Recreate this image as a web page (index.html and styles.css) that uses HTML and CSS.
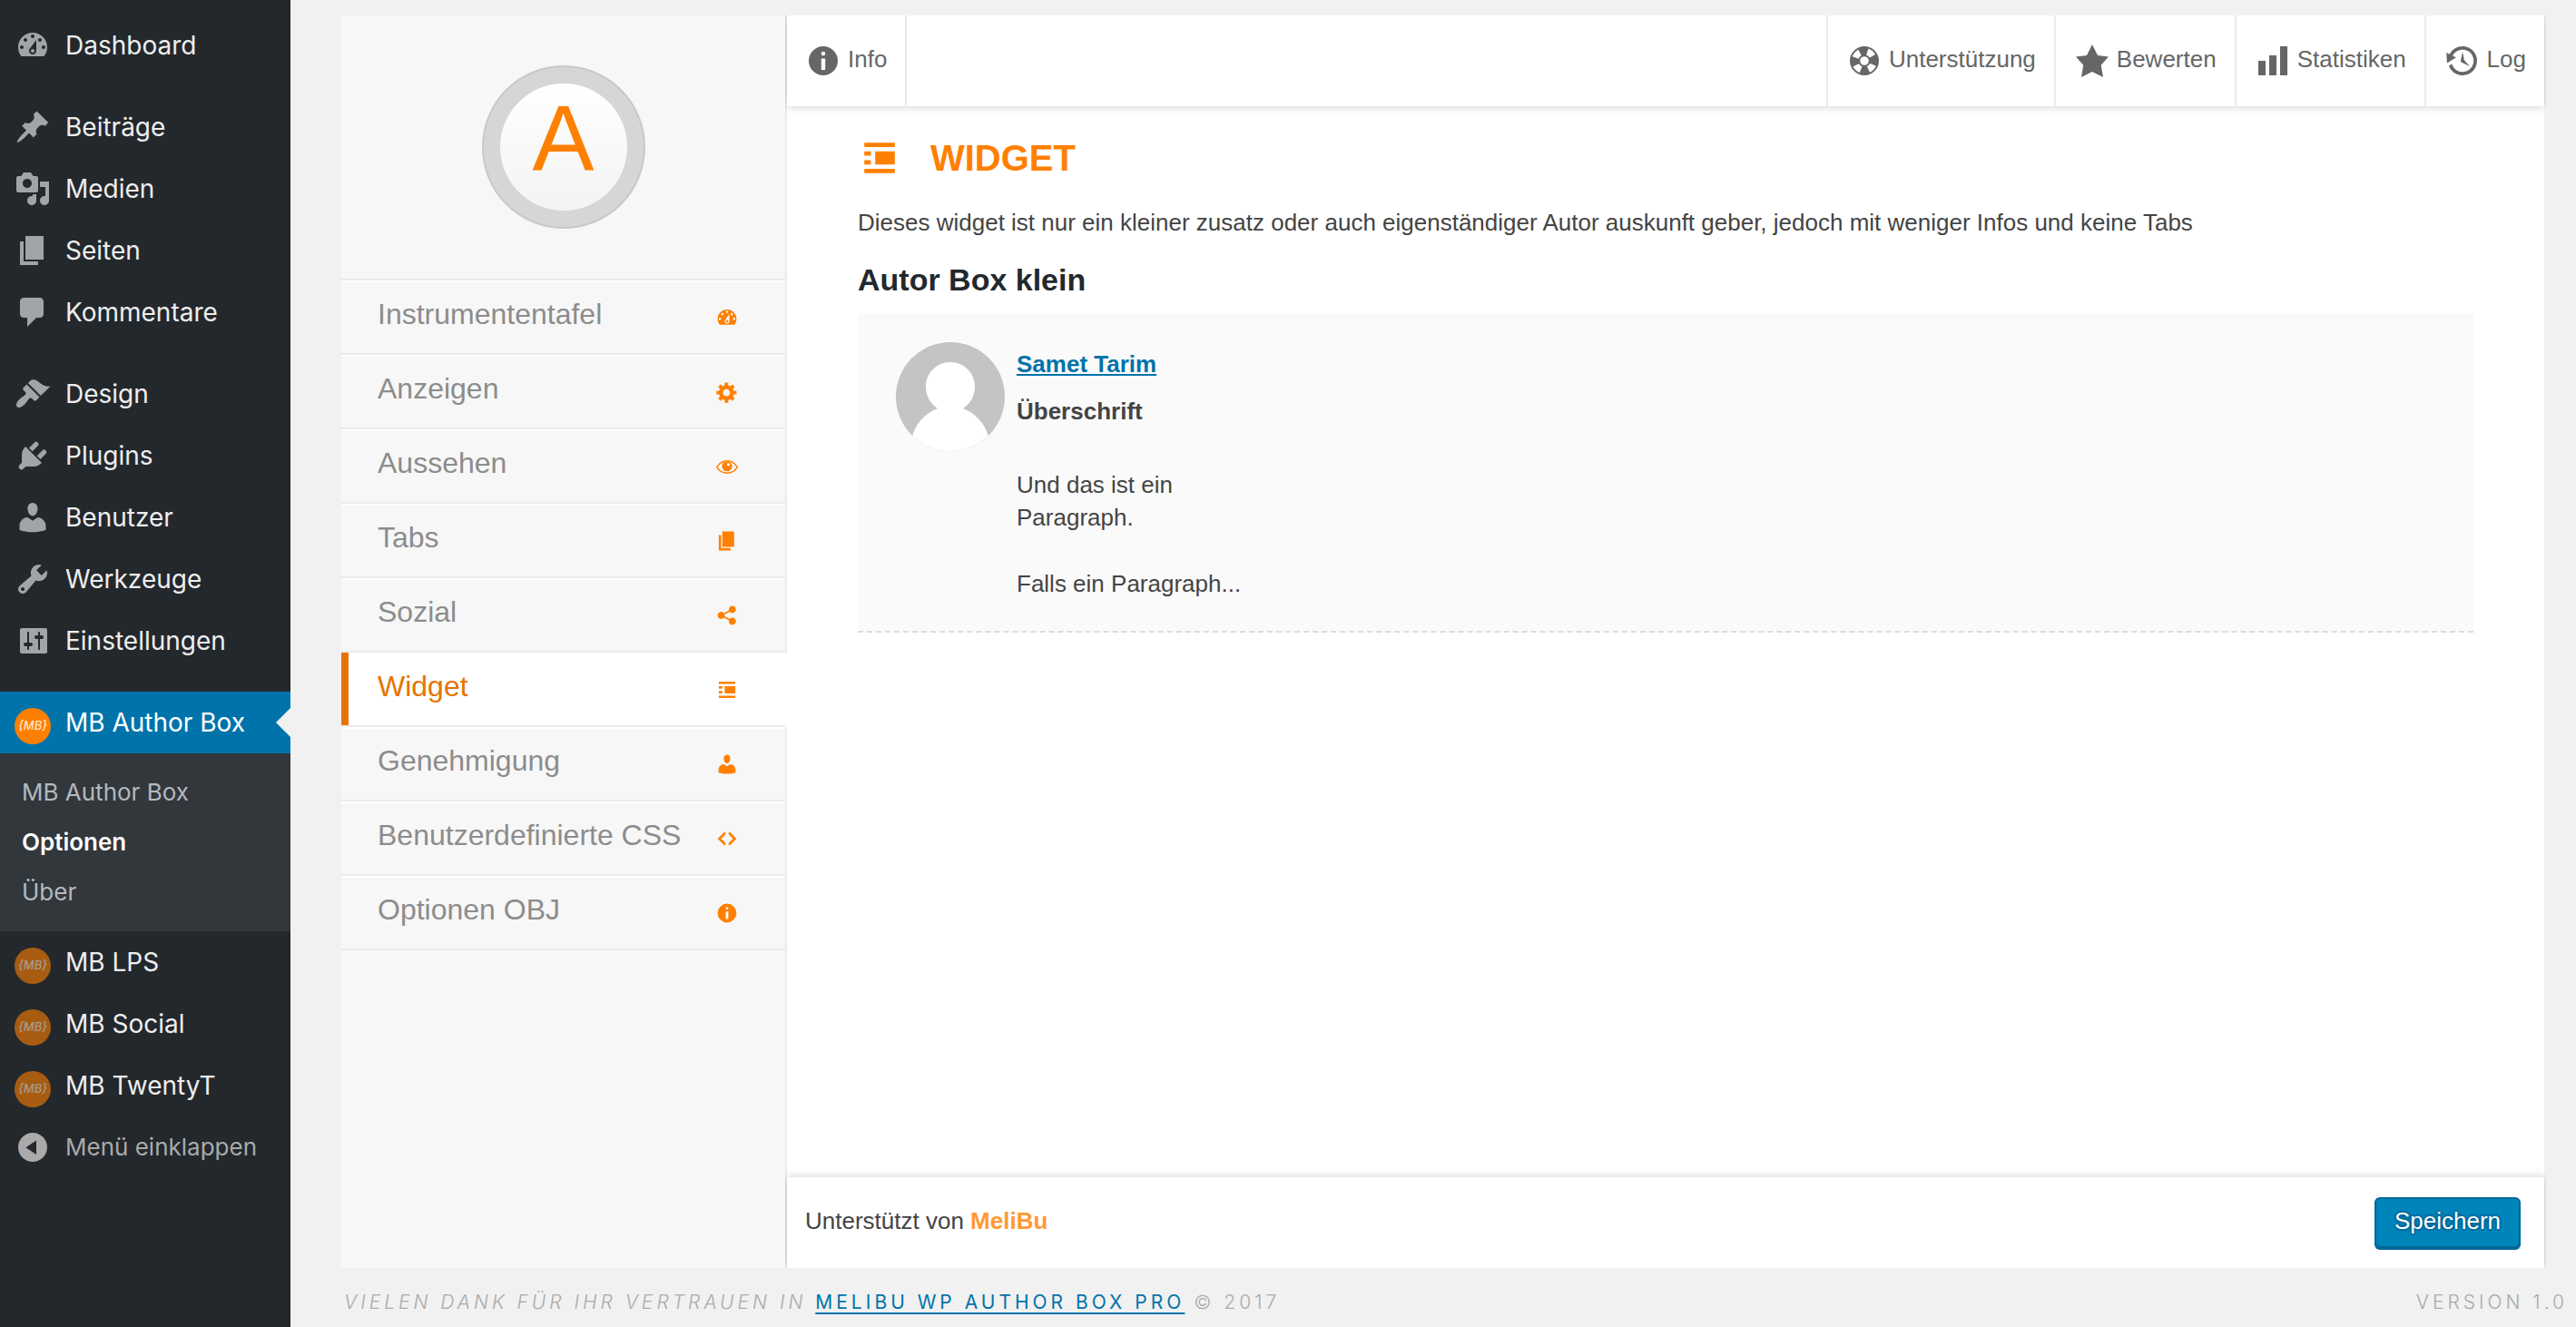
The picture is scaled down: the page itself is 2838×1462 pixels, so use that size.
FILE: index.html
```html
<!DOCTYPE html>
<html lang="de">
<head>
<meta charset="utf-8">
<title>MB Author Box – Optionen</title>
<link rel="stylesheet" href="styles.css">
</head>
<body>
<svg class="sprite" aria-hidden="true">
  <symbol id="i-dashboard" viewBox="0 0 20 20"><path fill-rule="evenodd" d="M3.76 16h12.48c1.1-1.37 1.76-3.11 1.76-5 0-4.42-3.58-8-8-8s-8 3.58-8 8c0 1.89.66 3.63 1.76 5zM10 4c.55 0 1 .45 1 1s-.45 1-1 1-1-.45-1-1 .45-1 1-1zM6 6c.55 0 1 .45 1 1s-.45 1-1 1-1-.45-1-1 .45-1 1-1zm8 0c.55 0 1 .45 1 1s-.45 1-1 1-1-.45-1-1 .45-1 1-1zm-5.37 5.55L12 7v6c0 1.1-.9 2-2 2s-2-.9-2-2c0-.57.24-1.08.63-1.45zM4 10c.55 0 1 .45 1 1s-.45 1-1 1-1-.45-1-1 .45-1 1-1zm12 0c.55 0 1 .45 1 1s-.45 1-1 1-1-.45-1-1 .45-1 1-1zm-5 3c0-.55-.45-1-1-1s-1 .45-1 1 .45 1 1 1 1-.45 1-1z"/></symbol>
  <symbol id="i-post" viewBox="0 0 20 20"><path d="M10.44 3.02l1.82-1.82 6.36 6.35-1.83 1.82c-1.05-.68-2.48-.57-3.41.36l-.75.75c-.92.93-1.04 2.35-.35 3.41l-1.83 1.82-2.41-2.41-2.8 2.79c-.42.42-3.38 2.71-3.8 2.29s1.86-3.39 2.28-3.81l2.79-2.79L4.1 9.36l1.83-1.82c1.05.69 2.48.57 3.4-.36l.75-.75c.93-.92 1.05-2.35.36-3.41z"/></symbol>
  <symbol id="i-media" viewBox="0 0 20 20"><path fill-rule="evenodd" d="M13 11V4c0-.55-.45-1-1-1h-1.67L9 1H5L3.67 3H2c-.55 0-1 .45-1 1v7c0 .55.45 1 1 1h10c.55 0 1-.45 1-1zM7 4.5c1.38 0 2.5 1.12 2.5 2.5S8.38 9.5 7 9.5 4.5 8.38 4.5 7 5.62 4.5 7 4.5zM14 6h5v10.5c0 1.38-1.12 2.5-2.5 2.5S14 17.88 14 16.5s1.12-2.5 2.5-2.5c.17 0 .34.02.5.05V9h-3V6zm-4 8.05V13h2v3.5c0 1.38-1.12 2.5-2.5 2.5S7 17.88 7 16.5 8.12 14 9.5 14c.17 0 .34.02.5.05z"/></symbol>
  <symbol id="i-pages" viewBox="0 0 20 20"><path d="M6 15V2h10v13H6zm-1 1h8v2H3V5h2v11z"/></symbol>
  <symbol id="i-comments" viewBox="0 0 20 20"><path d="M5 2h9c1.1 0 2 .9 2 2v7c0 1.1-.9 2-2 2h-2l-5 5v-5H5c-1.1 0-2-.9-2-2V4c0-1.1.9-2 2-2z"/></symbol>
  <symbol id="i-design" viewBox="0 0 20 20"><path d="M14.48 11.06L7.41 3.99l1.5-1.5c.5-.56 2.3-.47 3.51.32 1.21.8 1.43 1.28 2.91 2.1 1.18.64 2.45 1.26 4.45.85zm-.71.71L6.7 4.7 4.93 6.47c-.39.39-.39 1.02 0 1.41l1.06 1.06c.39.39.39 1.03 0 1.42-.6.6-1.43 1.11-2.21 1.69-.35.26-.7.53-1.01.84C1.43 14.23.4 16.08 1.4 17.07c.99 1 2.84-.03 4.18-1.36.31-.31.58-.66.85-1.02.57-.78 1.08-1.61 1.69-2.21.39-.39 1.02-.39 1.41 0l1.06 1.06c.39.39 1.02.39 1.41 0z"/></symbol>
  <symbol id="i-plugins" viewBox="0 0 20 20"><path d="M13.11 4.36L9.87 7.6 8 5.73l3.24-3.24c.35-.34 1.05-.2 1.56.32.52.51.66 1.21.31 1.55zm-8 1.77l.91-1.12 9.01 9.01-1.19.84c-.71.71-2.63 1.16-3.82 1.16H6.14L4.9 17.26c-.59.59-1.54.59-2.12 0-.59-.58-.59-1.53 0-2.12l1.24-1.24v-3.88c0-1.13.4-3.19 1.09-3.89zm7.26 3.97l3.24-3.24c.34-.35 1.04-.21 1.55.31.52.51.66 1.21.31 1.55l-3.24 3.25z"/></symbol>
  <symbol id="i-users" viewBox="0 0 20 20"><path d="M10 9.25c-2.27 0-2.73-3.44-2.73-3.44C7 4.02 7.82 2 9.97 2c2.16 0 2.98 2.02 2.71 3.81 0 0-.41 3.44-2.68 3.44zm0 2.57L12.72 10c2.39 0 4.52 2.33 4.52 4.53v2.49s-3.65 1.13-7.24 1.13c-3.65 0-7.24-1.13-7.24-1.13v-2.49c0-2.25 1.94-4.48 4.47-4.48z"/></symbol>
  <symbol id="i-tools" viewBox="0 0 20 20"><path fill-rule="evenodd" d="M16.68 9.77c-1.34 1.34-3.3 1.67-4.95.99l-5.41 6.52c-.99.99-2.59.99-3.58 0s-.99-2.59 0-3.57l6.52-5.42c-.68-1.65-.35-3.61.99-4.95 1.28-1.28 3.12-1.62 4.72-1.06l-2.89 2.89 2.82 2.82 2.86-2.87c.53 1.58.18 3.39-1.08 4.65zM3.81 16.21c.4.39 1.04.39 1.43 0 .4-.4.4-1.04 0-1.43-.39-.4-1.03-.4-1.43 0-.39.39-.39 1.03 0 1.43z"/></symbol>
  <symbol id="i-settings" viewBox="0 0 20 20"><path fill-rule="evenodd" d="M18 16V4c0-.55-.45-1-1-1H4c-.55 0-1 .45-1 1v12c0 .55.45 1 1 1h13c.55 0 1-.45 1-1zM8 11h1c.55 0 1 .45 1 1s-.45 1-1 1H8v1.5c0 .28-.22.5-.5.5s-.5-.22-.5-.5V13H6c-.55 0-1-.45-1-1s.45-1 1-1h1V5.5c0-.28.22-.5.5-.5s.5.22.5.5V11zm6-2v5.500c0 .28-.22.5-.5.5s-.5-.22-.5-.5V9h-1c-.55 0-1-.45-1-1s.45-1 1-1h1V5.500c0-.28.22-.5.5-.5s.5.22.5.5V7h1c.55 0 1 .45 1 1s-.45 1-1 1h-1z"/></symbol>
  <symbol id="i-collapse" viewBox="0 0 20 20"><path fill-rule="evenodd" d="M10 2a8 8 0 1 0 0 16 8 8 0 0 0 0-16zM12 6.200v7.800L6.200 10.100z"/></symbol>
  <symbol id="i-gear" viewBox="0 0 20 20"><path fill-rule="evenodd" d="M18 12h-2.180c-.17.7-.44 1.350-.81 1.930l1.540 1.540-2.100 2.100-1.540-1.540c-.58.36-1.230.63-1.910.79V19H8v-2.180c-.68-.16-1.330-.43-1.910-.79l-1.540 1.540-2.120-2.120 1.540-1.540c-.36-.58-.63-1.230-.79-1.910H1V9.030h2.170c.16-.7.44-1.350.8-1.940L2.430 5.550l2.100-2.100 1.540 1.540c.58-.37 1.240-.64 1.930-.81V2h3v2.180c.68.16 1.330.43 1.910.79l1.540-1.540 2.120 2.120-1.540 1.540c.36.59.64 1.240.8 1.940H18V12zm-8.500 1.500c1.660 0 3-1.340 3-3s-1.340-3-3-3-3 1.340-3 3 1.340 3 3 3z"/></symbol>
  <symbol id="i-eye" viewBox="0 0 20 20"><path fill="none" stroke="currentColor" stroke-width="1.200" d="M1.300 10.500C5.500 3.400 14.500 3.400 18.700 10.500 14.500 17.200 5.500 17.200 1.300 10.500z"/><path fill-rule="evenodd" d="M10 5.500a4.300 4.300 0 1 0 0 8.600 4.300 4.300 0 0 0 0-8.600zm1.200 1.600a1.300 1.300 0 1 1 0 2.600 1.300 1.300 0 0 1 0-2.600z"/></symbol>
  <symbol id="i-share" viewBox="0 0 20 20"><path d="M14.500 12c1.660 0 3 1.340 3 3s-1.340 3-3 3-3-1.340-3-3c0-.24.03-.46.09-.69l-4.380-2.300c-.55.61-1.330.99-2.210.99-1.660 0-3-1.340-3-3s1.340-3 3-3c.88 0 1.660.39 2.210.99l4.380-2.300c-.06-.23-.09-.45-.09-.69 0-1.660 1.340-3 3-3s3 1.340 3 3-1.340 3-3 3c-.88 0-1.660-.39-2.210-.99l-4.380 2.300c.06.23.09.45.09.69s-.03.46-.09.69l4.380 2.300c.55-.61 1.330-.99 2.210-.99z"/></symbol>
  <symbol id="i-widget" viewBox="0 0 20 20"><path d="M3 3h14v2H3zM3 7h3v2H3zM8 7h9v6H8zM3 11h3v2H3zM3 15h14v2H3z"/></symbol>
  <symbol id="i-code" viewBox="0 0 20 20"><path d="M9 6l-4 4 4 4-1 2-6-6 6-6zm2 8l4-4-4-4 1-2 6 6-6 6z"/></symbol>
  <symbol id="i-info" viewBox="0 0 20 20"><path fill-rule="evenodd" d="M10 2a8 8 0 1 0 0 16 8 8 0 0 0 0-16zm0 2.900a1.150 1.150 0 1 1 0 2.300 1.150 1.150 0 0 1 0-2.300zM8.900 8.700h2.200V15H8.900z"/></symbol>
  <symbol id="i-sos" viewBox="0 0 20 20"><g fill="none" stroke="currentColor"><circle cx="10" cy="10" r="7.500"/><circle cx="10" cy="10" r="2.900"/><circle cx="10" cy="10" r="5.200" stroke-width="4.400" pathLength="360" stroke-dasharray="48 42" stroke-dashoffset="24"/></g></symbol>
  <symbol id="i-star" viewBox="0 0 20 20"><path d="M10 1l3 6 6 .75-4.120 4.620L16 19l-6-3-6 3 1.130-6.630L1 7.750 7 7z"/></symbol>
  <symbol id="i-chart" viewBox="0 0 20 20"><path d="M18 18V2h-4v16h4zm-6 0V7H8v11h4zm-6 0v-8H2v8h4z"/></symbol>
  <symbol id="i-log" viewBox="0 0 20 20"><path d="M13.650 2.880c3.930 2.010 5.480 6.840 3.470 10.770s-6.830 5.480-10.770 3.470c-1.870-.96-3.200-2.560-3.860-4.400l1.640-1.030c.45 1.570 1.520 2.950 3.080 3.760 3.010 1.540 6.690.35 8.230-2.660 1.550-3.010.36-6.690-2.650-8.240C9.780 3.010 6.100 4.200 4.560 7.210l1.880.97-4.950 3.080-.39-5.820 1.780.91C4.900 2.400 9.750.89 13.650 2.880zm-4.360 7.830C9.110 10.530 9 10.280 9 10c0-.07.03-.12.04-.19h-.01L10 5l.97 4.810L14 13l-4.500-2.120.02-.02c-.08-.04-.16-.09-.23-.15z"/></symbol>
</svg>

<div class="page">
  <nav class="menu" aria-label="Hauptmenü">
    <ul class="menu-group">
      <li><a class="menu-item" href="#"><svg class="menu-icon"><use href="#i-dashboard"/></svg>Dashboard</a></li>
    </ul>
    <ul class="menu-group">
      <li><a class="menu-item" href="#"><svg class="menu-icon"><use href="#i-post"/></svg>Beiträge</a></li>
      <li><a class="menu-item" href="#"><svg class="menu-icon"><use href="#i-media"/></svg>Medien</a></li>
      <li><a class="menu-item" href="#"><svg class="menu-icon"><use href="#i-pages"/></svg>Seiten</a></li>
      <li><a class="menu-item" href="#"><svg class="menu-icon"><use href="#i-comments"/></svg>Kommentare</a></li>
    </ul>
    <ul class="menu-group">
      <li><a class="menu-item" href="#"><svg class="menu-icon"><use href="#i-design"/></svg>Design</a></li>
      <li><a class="menu-item" href="#"><svg class="menu-icon"><use href="#i-plugins"/></svg>Plugins</a></li>
      <li><a class="menu-item" href="#"><svg class="menu-icon"><use href="#i-users"/></svg>Benutzer</a></li>
      <li><a class="menu-item" href="#"><svg class="menu-icon"><use href="#i-tools"/></svg>Werkzeuge</a></li>
      <li><a class="menu-item" href="#"><svg class="menu-icon"><use href="#i-settings"/></svg>Einstellungen</a></li>
    </ul>
    <ul class="menu-group">
      <li>
        <a class="menu-item current" href="#"><span class="mb" aria-hidden="true">{MB}</span>MB Author Box</a>
        <ul class="submenu">
          <li><a href="#">MB Author Box</a></li>
          <li><a class="active" href="#">Optionen</a></li>
          <li><a href="#">Über</a></li>
        </ul>
      </li>
      <li><a class="menu-item" href="#"><span class="mb" aria-hidden="true">{MB}</span>MB LPS</a></li>
      <li><a class="menu-item" href="#"><span class="mb" aria-hidden="true">{MB}</span>MB Social</a></li>
      <li><a class="menu-item" href="#"><span class="mb" aria-hidden="true">{MB}</span>MB TwentyT</a></li>
      <li><button type="button" class="menu-item collapse"><svg class="menu-icon"><use href="#i-collapse"/></svg>Menü einklappen</button></li>
    </ul>
  </nav>

  <div class="main">
    <div class="panel">
      <aside class="side">
        <div class="brand"><span class="logo"><span class="logo-face">A</span></span></div>
        <nav aria-label="Optionen">
          <ul class="tabs">
            <li><a class="tab" href="#"><span class="tab-label">Instrumententafel</span><svg class="tab-icon"><use href="#i-dashboard"/></svg></a></li>
            <li><a class="tab" href="#"><span class="tab-label">Anzeigen</span><svg class="tab-icon"><use href="#i-gear"/></svg></a></li>
            <li><a class="tab" href="#"><span class="tab-label">Aussehen</span><svg class="tab-icon"><use href="#i-eye"/></svg></a></li>
            <li><a class="tab" href="#"><span class="tab-label">Tabs</span><svg class="tab-icon"><use href="#i-pages"/></svg></a></li>
            <li><a class="tab" href="#"><span class="tab-label">Sozial</span><svg class="tab-icon"><use href="#i-share"/></svg></a></li>
            <li><a class="tab selected" href="#" aria-current="page"><span class="tab-label">Widget</span><svg class="tab-icon"><use href="#i-widget"/></svg></a></li>
            <li><a class="tab" href="#"><span class="tab-label">Genehmigung</span><svg class="tab-icon"><use href="#i-users"/></svg></a></li>
            <li><a class="tab" href="#"><span class="tab-label">Benutzerdefinierte CSS</span><svg class="tab-icon"><use href="#i-code"/></svg></a></li>
            <li><a class="tab" href="#"><span class="tab-label">Optionen OBJ</span><svg class="tab-icon"><use href="#i-info"/></svg></a></li>
          </ul>
        </nav>
      </aside>

      <div class="body">
        <header class="topbar">
          <a class="top-link first" href="#"><svg class="top-icon"><use href="#i-info"/></svg><span class="label">Info</span></a>
          <a class="top-link" href="#"><svg class="top-icon"><use href="#i-sos"/></svg><span class="label">Unterstützung</span></a>
          <a class="top-link" href="#"><svg class="top-icon"><use href="#i-star"/></svg><span class="label">Bewerten</span></a>
          <a class="top-link" href="#"><svg class="top-icon"><use href="#i-chart"/></svg><span class="label">Statistiken</span></a>
          <a class="top-link" href="#"><svg class="top-icon"><use href="#i-log"/></svg><span class="label">Log</span></a>
        </header>

        <main class="content">
          <h1><svg class="title-icon"><use href="#i-widget"/></svg>WIDGET</h1>
          <p class="intro">Dieses widget ist nur ein kleiner zusatz oder auch eigenständiger Autor auskunft geber, jedoch mit weniger Infos und keine Tabs</p>
          <h2>Autor Box klein</h2>
          <section class="author">
            <svg class="avatar" viewBox="0 0 120 120" aria-hidden="true">
              <clipPath id="round"><circle cx="60" cy="60" r="60"/></clipPath>
              <g clip-path="url(#round)">
                <rect width="120" height="120" fill="#c4c4c4"/>
                <path fill="#fff" d="M60 22c15 0 27 12 27 27 0 10-5 19-13 24 13 5 24 16 28 31v16H18v-16c4-15 15-26 28-31-8-5-13-14-13-24 0-15 12-27 27-27z"/>
              </g>
            </svg>
            <div class="bio">
              <a class="author-name" href="#">Samet Tarim</a>
              <h3>Überschrift</h3>
              <p>Und das ist ein<br>Paragraph.</p>
              <p>Falls ein Paragraph...</p>
            </div>
          </section>
        </main>

        <footer class="actions">
          <p class="label">Unterstützt von <a href="#">MeliBu</a></p>
          <button type="submit" class="save">Speichern</button>
        </footer>
      </div>
    </div>

    <footer class="credits">
      <p><em>Vielen Dank für Ihr Vertrauen in</em> <a href="#">MeliBu WP Author Box PRO</a> © 2017</p>
      <p>Version 1.0</p>
    </footer>
  </div>
</div>
</body>
</html>
```
FILE: styles.css
```css
* { box-sizing: border-box; }

body {
  margin: 0;
  background: #f1f1f1;
  color: #444;
  font: 26px/36px "Liberation Sans", Arial, sans-serif;
}

ul { margin: 0; padding: 0; list-style: none; }
p, h1, h2, h3 { margin: 0; }
a { text-decoration: none; }
svg { display: block; flex: none; fill: currentColor; }

.sprite { position: absolute; width: 0; height: 0; }

.page { display: flex; min-height: 100vh; }

/* Admin menu */
.menu {
  flex: none;
  display: flex;
  flex-direction: column;
  gap: 22px;
  width: 320px;
  padding-top: 16px;
  background: #23282d;
  font-family: Inter, sans-serif;
}

.menu-item {
  display: flex;
  align-items: center;
  gap: 16px;
  width: 100%;
  height: 68px;
  padding: 0 16px;
  border: 0;
  background: none;
  color: #eee;
  font: 28px/36px Inter, sans-serif;
  white-space: nowrap;
}

.menu-icon { width: 40px; height: 40px; color: #a0a5aa; }

/* Round plugin badge */
.mb {
  flex: none;
  width: 40px;
  height: 40px;
  margin-top: 8px;
  border-radius: 50%;
  background: #ff8000;
  color: #ffe6cc;
  font-size: 13px;
  font-style: italic;
  font-weight: 500;
  line-height: 38px;
  text-align: center;
  opacity: .6;
}

.menu-item.current {
  position: relative;
  background: #0073aa;
  color: #fff;
}
.menu-item.current .mb { opacity: 1; }
.menu-item.current::after {
  content: "";
  position: absolute;
  top: 18px;
  right: 0;
  border: 16px solid transparent;
  border-left: 0;
  border-right-color: #f1f1f1;
}

.menu-item.collapse { color: #aaa; font-size: 26px; }
.menu-item.collapse .menu-icon { color: #aaa; }

.submenu { padding: 15px 0 16px; background: #32373c; }
.submenu a {
  display: block;
  padding: 0 24px;
  color: #b4b9be;
  font-size: 26px;
  line-height: 55px;
}
.submenu a.active { color: #fff; font-weight: 600; }

/* Options panel */
.main { flex: 1; display: flex; flex-direction: column; min-width: 0; }

.panel {
  flex: 1;
  display: flex;
  margin: 17px 35px 0 56px;
}

.side {
  flex: none;
  width: 491px;
  border-right: 2px solid #ebebeb;
  background: #f7f7f7;
}

.brand {
  display: flex;
  justify-content: center;
  padding: 55px 0;
  border-bottom: 2px solid #ebebeb;
}

.logo {
  display: grid;
  place-items: center;
  width: 180px;
  height: 180px;
  border: 2px solid #c9c9c9;
  border-radius: 50%;
  background: #d6d6d6;
}
.logo-face {
  width: 140px;
  height: 140px;
  border-radius: 50%;
  background: linear-gradient(#fff, #f3f3f3);
  color: #ff8000;
  font-size: 102px;
  line-height: 122px;
  text-align: center;
}

.tab {
  display: flex;
  align-items: center;
  justify-content: space-between;
  height: 82px;
  padding: 0 51px 0 40px;
  border-top: 2px solid #fff;
  border-bottom: 2px solid #ebebeb;
  color: #8c8c8c;
  font-size: 32px;
}
.tab-label { padding-bottom: 8px; }
.tab-icon { width: 26px; height: 26px; color: #ff8000; }

.tab.selected {
  padding-top: 2px;
  border-top: 0;
  background: #fff;
  box-shadow: inset 8px 0 #e67300, 2px 0 #fff;
  color: #e67300;
}

.body { flex: 1; display: flex; flex-direction: column; min-width: 0; background: #fff; }

.topbar {
  display: flex;
  height: 100px;
  background: #fff;
  box-shadow: 0 0 10px rgba(0, 0, 0, .2);
  clip-path: inset(0 -2px -12px);
}
.top-link {
  display: flex;
  align-items: center;
  gap: 7px;
  padding: 0 20px;
  border-left: 2px solid #ebebeb;
  color: #666;
}
.top-link.first {
  margin-right: auto;
  border-right: 2px solid #ebebeb;
  border-left: 0;
}
.top-icon { width: 40px; height: 40px; }
.label { padding-bottom: 4px; }

.content { flex: 1; padding: 33px 78px; }

h1 {
  display: flex;
  align-items: center;
  gap: 32px;
  color: #ff8000;
  font-size: 40px;
  line-height: 48px;
}
.title-icon { width: 48px; height: 48px; }

.intro { margin-top: 29px; }

h2 {
  margin: 24px 0 16px;
  color: #23282d;
  font-size: 34px;
  line-height: 42px;
}

.author {
  display: flex;
  align-items: flex-start;
  gap: 13px;
  padding: 32px 42px 34px;
  border-bottom: 2px dashed #ddd;
  background: #fafafa;
}
.avatar { width: 120px; height: 120px; }
.bio { padding-top: 6px; }
.author-name {
  color: #0073aa;
  font-weight: bold;
  text-decoration: underline;
}
.bio h3 { margin: 16px 0 45px; font-size: 26px; }
.bio p + p { margin-top: 37px; }

.actions {
  display: flex;
  align-items: center;
  justify-content: space-between;
  height: 100px;
  padding: 0 26px 0 20px;
  background: #fff;
  box-shadow: 0 0 10px rgba(0, 0, 0, .2);
  clip-path: inset(-12px -2px 0);
}
.actions a { color: #ff9933; font-weight: bold; }

.save {
  height: 56px;
  padding: 0 20px 4px;
  border: 2px solid #006799;
  border-radius: 6px;
  background: #0085ba;
  box-shadow: 0 2px #006799;
  color: #fff;
  font: 26px/36px "Liberation Sans", Arial, sans-serif;
  text-shadow: 0 -2px 2px #006799, 2px 0 2px #006799, 0 2px 2px #006799, -2px 0 2px #006799;
}

.credits {
  display: flex;
  justify-content: space-between;
  height: 65px;
  padding: 20px 9px 0 59px;
  color: #aaa;
  font: 300 21px/36px Inter, sans-serif;
  letter-spacing: 4px;
  text-transform: uppercase;
}
.credits a {
  color: #0073aa;
  font-weight: 400;
  text-decoration: underline;
  text-decoration-thickness: 2px;
  text-underline-offset: 4px;
}
```
